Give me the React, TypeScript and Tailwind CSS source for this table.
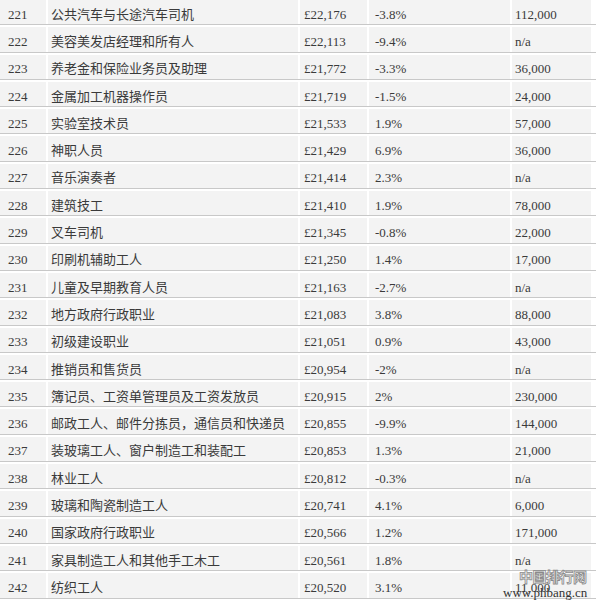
const rows: [string, string, string, string, string][] = [
  ["221", "公共汽车与长途汽车司机", "£22,176", "-3.8%", "112,000"],
  ["222", "美容美发店经理和所有人", "£22,113", "-9.4%", "n/a"],
  ["223", "养老金和保险业务员及助理", "£21,772", "-3.3%", "36,000"],
  ["224", "金属加工机器操作员", "£21,719", "-1.5%", "24,000"],
  ["225", "实验室技术员", "£21,533", "1.9%", "57,000"],
  ["226", "神职人员", "£21,429", "6.9%", "36,000"],
  ["227", "音乐演奏者", "£21,414", "2.3%", "n/a"],
  ["228", "建筑技工", "£21,410", "1.9%", "78,000"],
  ["229", "叉车司机", "£21,345", "-0.8%", "22,000"],
  ["230", "印刷机辅助工人", "£21,250", "1.4%", "17,000"],
  ["231", "儿童及早期教育人员", "£21,163", "-2.7%", "n/a"],
  ["232", "地方政府行政职业", "£21,083", "3.8%", "88,000"],
  ["233", "初级建设职业", "£21,051", "0.9%", "43,000"],
  ["234", "推销员和售货员", "£20,954", "-2%", "n/a"],
  ["235", "簿记员、工资单管理员及工资发放员", "£20,915", "2%", "230,000"],
  ["236", "邮政工人、邮件分拣员，通信员和快递员", "£20,855", "-9.9%", "144,000"],
  ["237", "装玻璃工人、窗户制造工和装配工", "£20,853", "1.3%", "21,000"],
  ["238", "林业工人", "£20,812", "-0.3%", "n/a"],
  ["239", "玻璃和陶瓷制造工人", "£20,741", "4.1%", "6,000"],
  ["240", "国家政府行政职业", "£20,566", "1.2%", "171,000"],
  ["241", "家具制造工人和其他手工木工", "£20,561", "1.8%", "n/a"],
  ["242", "纺织工人", "£20,520", "3.1%", "11,000"],
];

function Row({ r }: { r: [string, string, string, string, string] }) {
  const cell = "flex items-center bg-[#f3f3f3] pt-[4px]";
  return (
    <div className="flex gap-[2px] h-[25.3px] mb-[2px] border-b border-[#c8c8c8] w-[596px] pr-[5px]">
      <div className={`${cell} w-[46px] pl-[8px]`}>{r[0]}</div>
      <div className={`${cell} w-[250px] pl-[3px]`}>{r[1]}</div>
      <div className={`${cell} w-[67px] pl-[4px]`}>{r[2]}</div>
      <div className={`${cell} w-[141px] pl-[6px]`}>{r[3]}</div>
      <div className={`${cell} flex-1 pl-[3px]`}>{r[4]}</div>
    </div>
  );
}

export default function App() {
  return (
    <div className="relative w-[599px] h-[604px] bg-white overflow-hidden text-[13px] text-[#3a3a3a] font-['Liberation_Serif','Noto_Sans_CJK_SC',serif] leading-none">
      <div className="flex flex-col">
        {rows.map((r) => (
          <Row key={r[0]} r={r} />
        ))}
      </div>
      {/* watermark */}
      <div className="absolute left-[519px] top-[569px] text-[14px] font-bold tracking-[-0.5px] text-transparent [-webkit-text-stroke:0.8px_#8a8a8a] font-['Noto_Sans_CJK_SC',sans-serif]">
        中国排行网
      </div>
      <div className="absolute left-[503px] top-[586px] text-[13px] text-[#333]">
        www.phbang.cn
      </div>
    </div>
  );
}
